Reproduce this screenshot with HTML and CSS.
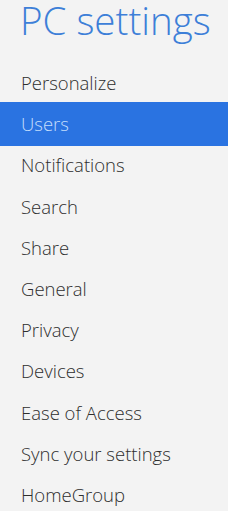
FILE: index.html
```html
<!DOCTYPE html>
<html lang="en">
<head>
  <meta charset="UTF-8" />
  <meta name="viewport" content="width=device-width, initial-scale=1.0" />
  <title>PC settings</title>
  <link rel="stylesheet" href="styles.css">
</head>
<body>

  <div class="settings">
    <h1 class="title">PC settings</h1>

    <!-- Category list -->
    <ul class="menu">
      <li class="menu-item">Personalize</li>
      <li class="menu-item active">Users</li>
      <li class="menu-item">Notifications</li>
      <li class="menu-item">Search</li>
      <li class="menu-item">Share</li>
      <li class="menu-item">General</li>
      <li class="menu-item">Privacy</li>
      <li class="menu-item">Devices</li>
      <li class="menu-item">Ease of Access</li>
      <li class="menu-item">Sync your settings</li>
      <li class="menu-item">HomeGroup</li>
    </ul>
  </div>

</body>
</html>
```

FILE: styles.css
```css
* {
  box-sizing: border-box;
}

body {
  margin: 0;
  font-family: 'Open Sans', 'Noto Sans', sans-serif;
  background-color: #f3f3f3;
  color: #2e2e2e;
}

.settings {
  width: 228px;
}

.title {
  margin: 0;
  padding: 0 0 0 20px;
  height: 62px;
  font-size: 38.5px;
  font-weight: 300;
  line-height: 40px;
  color: #3d7fd8;
  white-space: nowrap;
}

.menu {
  list-style: none;
  margin: 0;
  padding: 0;
}

.menu-item {
  height: 41.2px;
  padding-left: 21px;
  font-size: 18.5px;
  font-weight: 300;
  line-height: 41.2px;
  white-space: nowrap;
}

.menu-item.active {
  background-color: #2a73e1;
  color: #c4defc;
  height: 44px;
  line-height: 44px;
  margin: -1.4px 0;
}
```
